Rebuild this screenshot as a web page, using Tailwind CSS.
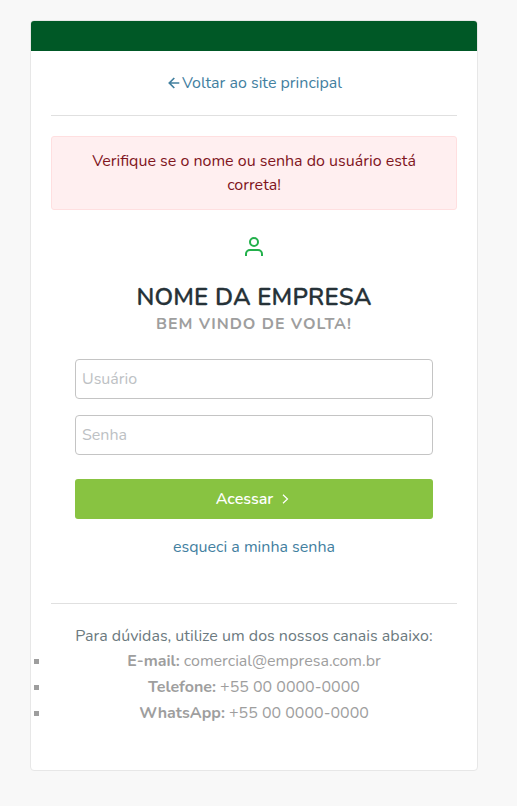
<!DOCTYPE html>
<html lang="pt-BR">
<head>
<meta charset="utf-8">
<meta name="viewport" content="width=device-width, initial-scale=1">
<title>Nome da Empresa</title>
<script src="https://cdn.jsdelivr.net/npm/@tailwindcss/browser@4"></script>
</head>
<body class="min-h-screen bg-[#f8f8f8] pl-[30px] pt-5 font-['Nunito','Lato',sans-serif] text-base text-[#9e9e9e]">
<main class="h-[751px] w-[448px] overflow-hidden rounded border border-[#e7e7e7] bg-white text-center">
  <div class="h-[30px] bg-[#005826]"></div>
  <div class="px-5">
    <nav class="flex h-16 items-center justify-center text-[#43809f]">
      <a href="#" class="flex items-center gap-[2px] pl-[2px]">
        <svg class="size-[12px]" viewBox="0 0 12 12" fill="none" stroke="currentColor" stroke-width="1.7"><path d="M11.3 6H1.5M6.3 1 1.3 6l5 5"/></svg>
        <span class="whitespace-nowrap">Voltar ao site principal</span>
      </a>
    </nav>
    <hr class="border-[#e0e0e0]">
    <div class="mt-5 h-[74px] rounded-[3px] border border-[#ffdfe0] bg-[#ffeff0] px-8 pt-3 leading-6 text-[#80151d]">
      <p class="whitespace-nowrap">Verifique se o nome ou senha do usuário está</p>
      <p>correta!</p>
    </div>
    <svg class="mx-auto mt-[25px] h-6 w-6 text-[#22b04b]" viewBox="0 0 24 24" fill="none" stroke="currentColor" stroke-width="2"><path d="M20 21v-2a4 4 0 0 0-4-4H8a4 4 0 0 0-4 4v2"/><circle cx="12" cy="7" r="4"/></svg>
    <h1 class="mt-[23px] text-2xl leading-[30px] font-semibold tracking-[0.2px] text-[#263238] [-webkit-text-stroke:0.3px_#263238]">NOME DA EMPRESA</h1>
    <p class="leading-6 font-bold tracking-[1px] whitespace-nowrap">BEM VINDO DE VOLTA!</p>
    <form class="mx-6 mt-[23px]">
      <input type="text" placeholder="Usuário" class="block h-10 w-full rounded border border-[#c4c4c4] px-1.5 placeholder:text-[#bdc1c4]">
      <input type="password" placeholder="Senha" class="mt-4 block h-10 w-full rounded border border-[#c4c4c4] px-1.5 placeholder:text-[#bdc1c4]">
      <button type="button" class="mt-6 flex h-10 w-full items-center justify-center gap-[9px] rounded-[3px] bg-[#88c341] pr-[3px] font-semibold text-white">
        <span>Acessar</span>
        <svg class="h-[10px] w-[7px]" viewBox="0 0 7 10" fill="none" stroke="currentColor" stroke-width="1.2"><path d="m1 .7 4.5 4.3L1 9.3"/></svg>
      </button>
    </form>
    <a href="#" class="mt-4 block leading-6 text-[#43809f]">esqueci a minha senha</a>
    <hr class="mt-11 border-[#e0e0e0]">
    <p class="mt-5 leading-6 whitespace-nowrap text-[#6c7a80]">Para dúvidas, utilize um dos nossos canais abaixo:</p>
    <ul class="-ml-[17px] leading-[26px]">
      <li class="flex items-center"><i class="size-[5px] bg-[#9e9e9e]"></i><span class="grow pl-3"><b>E-mail:</b> comercial@empresa.com.br</span></li>
      <li class="flex items-center"><i class="size-[5px] bg-[#9e9e9e]"></i><span class="grow pl-3"><b>Telefone:</b> +55 00 0000-0000</span></li>
      <li class="flex items-center"><i class="size-[5px] bg-[#9e9e9e]"></i><span class="grow pl-3"><b>WhatsApp:</b> +55 00 0000-0000</span></li>
    </ul>
  </div>
</main>
</body>
</html>
